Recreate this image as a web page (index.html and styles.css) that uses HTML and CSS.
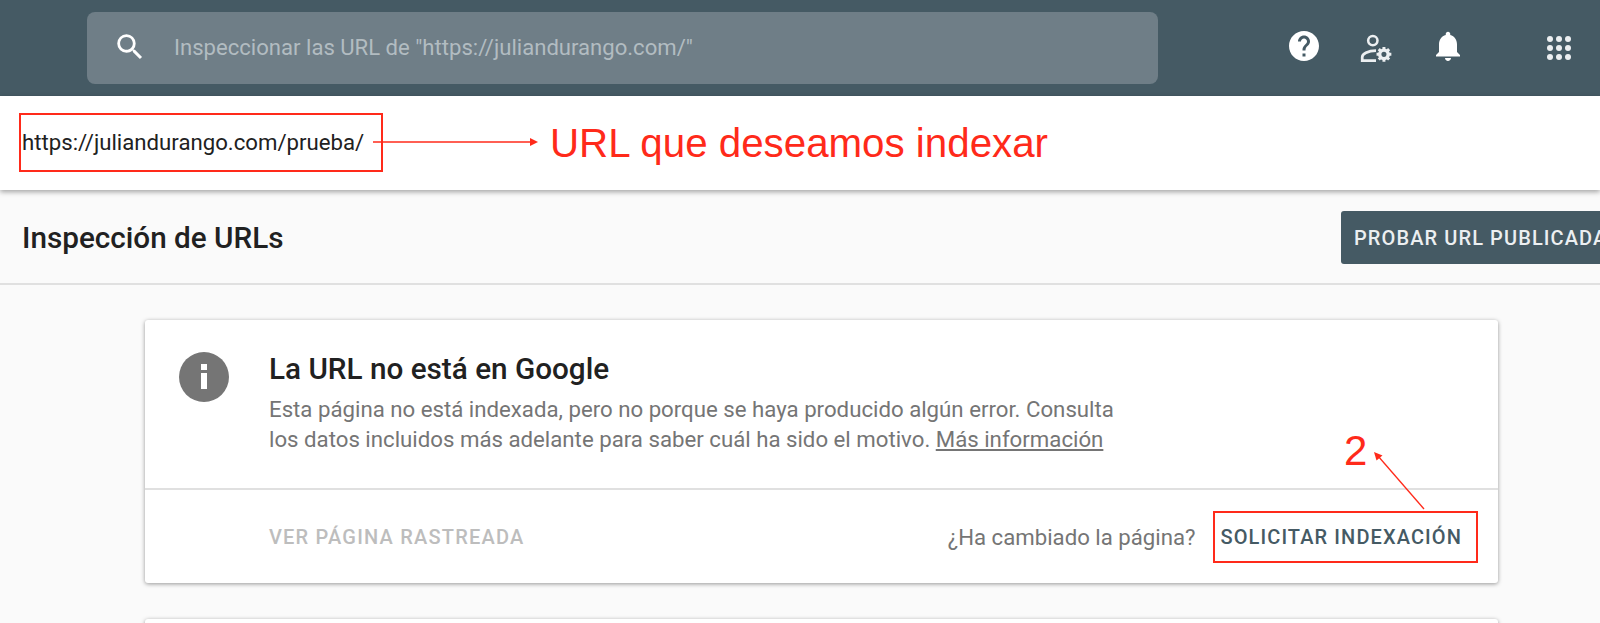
FILE: index.html
```html
<!DOCTYPE html>
<html lang="es">
<head>
<meta charset="utf-8">
<title>Inspección de URLs</title>
<link rel="stylesheet" href="styles.css">
</head>
<body>
<div class="page">
  <header class="topbar">
    <div class="search">
      <svg class="search-icon" viewBox="0 0 24 24"><path d="M15.5 14h-.79l-.28-.27A6.47 6.47 0 0 0 16 9.5 6.5 6.5 0 1 0 9.5 16c1.61 0 3.09-.59 4.23-1.57l.27.28v.79l5 4.99L20.49 19l-4.99-5zm-6 0C7.01 14 5 11.99 5 9.500S7.010 5 9.500 5 14 7.010 14 9.500 11.990 14 9.500 14z"/></svg>
      <span class="search-text">Inspeccionar las URL de "https://juliandurango.com/"</span>
    </div>
    <div class="top-icons">
      <svg class="ic ic-help" viewBox="0 0 24 24"><path d="M12 2C6.48 2 2 6.48 2 12s4.48 10 10 10 10-4.48 10-10S17.52 2 12 2zm1 17h-2v-2h2v2zm2.07-7.75l-.9.92C13.45 12.9 13 13.5 13 15h-2v-.5c0-1.1.45-2.1 1.17-2.83l1.24-1.26c.37-.36.59-.86.59-1.41 0-1.1-.9-2-2-2s-2 .9-2 2H8c0-2.21 1.79-4 4-4s4 1.79 4 4c0 .88-.36 1.68-.93 2.25z"/></svg>
      <svg class="ic ic-user" viewBox="0 0 34 30"><circle cx="14" cy="8" r="4.400" fill="none" stroke="#eceff1" stroke-width="2.400"/><path d="M17 17.500c-8 0-13 3.500-13 6v3.500h13" fill="none" stroke="#eceff1" stroke-width="2.600"/><circle cx="24.500" cy="21" r="4" fill="none" stroke="#eceff1" stroke-width="3.200"/><path d="M24.500 14v3M24.500 25v3M17.500 21h3M28.500 21h3M19.600 16.100l2.100 2.100M27.300 23.800l2.100 2.100M19.600 25.900l2.100-2.100M27.300 18.200l2.100-2.100" stroke="#eceff1" stroke-width="2.800"/></svg>
      <svg class="ic ic-bell" viewBox="0 0 24 24"><path d="M12 22c1.100 0 2-.9 2-2h-4c0 1.100.9 2 2 2zm6-6v-5c0-3.070-1.630-5.640-4.500-6.320V4c0-.83-.67-1.500-1.500-1.500s-1.500.67-1.500 1.500v.68C7.640 5.360 6 7.920 6 11v5l-2 2v1h16v-1l-2-2z"/></svg>
      <svg class="ic ic-apps" viewBox="0 0 26 26"><g fill="#eceff1"><circle cx="4" cy="4" r="3"/><circle cx="13" cy="4" r="3"/><circle cx="22" cy="4" r="3"/><circle cx="4" cy="13" r="3"/><circle cx="13" cy="13" r="3"/><circle cx="22" cy="13" r="3"/><circle cx="4" cy="22" r="3"/><circle cx="13" cy="22" r="3"/><circle cx="22" cy="22" r="3"/></g></svg>
    </div>
  </header>

  <section class="urlbar">
    <span class="url">https://juliandurango.com/prueba/</span>
  </section>

  <section class="titlebar">
    <h1 class="title">Inspección de URLs</h1>
    <button class="primary">PROBAR URL PUBLICADA</button>
  </section>

  <main class="content">
    <article class="card">
      <div class="card-body">
        <svg class="info" viewBox="0 0 50 50"><circle cx="25" cy="25" r="25" fill="#757575"/><rect x="22" y="21" width="6" height="16" fill="#fff"/><rect x="22" y="12" width="6" height="6" fill="#fff"/></svg>
        <div class="card-text">
          <h2 class="card-title">La URL no está en Google</h2>
          <p class="card-desc">Esta página no está indexada, pero no porque se haya producido algún error. Consulta<br>los datos incluidos más adelante para saber cuál ha sido el motivo. <a class="more">Más información</a></p>
        </div>
      </div>
      <div class="card-foot">
        <span class="crawled">VER PÁGINA RASTREADA</span>
        <div class="foot-right">
          <span class="changed">¿Ha cambiado la página?</span>
          <span class="request">SOLICITAR INDEXACIÓN</span>
        </div>
      </div>
    </article>
    <div class="card next"></div>
  </main>

  <div class="mark mark-url"></div>
  <div class="mark mark-req"></div>
  <span class="note note-url">URL que deseamos indexar</span>
  <span class="note note-two">2</span>
  <svg class="arrows" viewBox="0 0 1600 623"><g stroke="#ff2a1a" fill="#ff2a1a" stroke-width="1.300"><path d="M373 142H534" fill="none"/><path d="M538 142l-8-4v8z" stroke="none"/><path d="M1424 509L1378 456" fill="none"/><path d="M1374 452l2.500 8.500 6-5z" stroke="none"/></g></svg>
</div>
</body>
</html>
```

FILE: styles.css
```css
* { box-sizing: border-box; }
html, body { margin: 0; padding: 0; }
body { font-family: Roboto, "Liberation Sans", sans-serif; background: #fafafa; overflow: hidden; }
.page { position: relative; width: 1600px; height: 623px; overflow: hidden; background: #fafafa; }

.topbar { height: 96px; background: #455a64; padding: 12px 0 0 87px; display: flex; align-items: flex-start; }
.search { width: 1071px; height: 72px; background: #6f7e87; border-radius: 8px; display: flex; align-items: center; padding: 0 0 2px 26px; }
.search-icon { width: 34px; height: 34px; fill: #fff; flex: none; }
.search-text { margin-left: 27px; font-size: 22.100px; color: #b2bcc1; white-space: nowrap; }
.top-icons { height: 72px; position: relative; flex: 1; }
.ic { position: absolute; fill: #fff; }
.ic-help { left: 128px; top: 16px; width: 36px; height: 36px; }
.ic-user { left: 200px; top: 20px; width: 36px; height: 32px; }
.ic-bell { left: 272px; top: 16px; width: 36px; height: 36px; }
.ic-apps { left: 388px; top: 23px; width: 26px; height: 26px; }

.urlbar { height: 94px; background: #fff; display: flex; align-items: center; padding: 0 0 2px 22px; box-shadow: 0 2px 5px rgba(0,0,0,.35); position: relative; }
.url { font-size: 22.200px; color: #212121; }

.titlebar { height: 95px; border-bottom: 2px solid #e0e0e0; display: flex; align-items: center; justify-content: space-between; padding-left: 22px; }
.title { margin: 2px 0 0; font-size: 29.700px; font-weight: 500; color: #212121; }
.primary { flex: none; width: 259px; height: 53px; margin: 2px 0 0; border: 0; border-radius: 3px 0 0 3px; background: #455a64; color: #eceff1; font: 500 20px Roboto, sans-serif; letter-spacing: 1.100px; text-align: left; padding-left: 13px; white-space: nowrap; overflow: hidden; }

.content { padding: 35px 102px 0 145px; display: flex; flex-direction: column; gap: 36px; }
.card { background: #fff; border-radius: 3px; box-shadow: 0 1px 4px rgba(0,0,0,.4); flex: none; }
.card-body { height: 170px; border-bottom: 2px solid #e0e0e0; display: flex; padding: 32px 0 0 34px; }
.info { width: 50px; height: 50px; flex: none; }
.card-text { margin-left: 40px; padding-top: 1px; }
.card-title { margin: 0; font-size: 29.700px; font-weight: 500; color: #212121; line-height: 32px; }
.card-desc { margin: 10px 0 0; font-size: 22.230px; line-height: 29.500px; color: #757575; }
.more { color: #757575; text-decoration: underline; }
.card-foot { height: 93px; display: flex; justify-content: space-between; align-items: center; padding-left: 124px; }
.crawled { font-size: 20px; font-weight: 500; letter-spacing: 1.200px; color: #bdbdbd; }
.foot-right { display: flex; align-items: center; }
.changed { font-size: 22.200px; color: #757575; }
.request { font-size: 20px; font-weight: 500; letter-spacing: 1.100px; color: #455a64; margin: 0 36px 0 25px; }
.next { height: 60px; }

.mark { position: absolute; border: 2px solid #ff2a1a; }
.mark-url { left: 19px; top: 113px; width: 364px; height: 59px; }
.mark-req { left: 1213px; top: 511px; width: 265px; height: 52px; }
.note { position: absolute; color: #ff2a1a; font-family: "Liberation Sans", Arial, sans-serif; white-space: nowrap; }
.note-url { left: 550px; top: 121px; font-size: 40.300px; }
.note-two { left: 1344px; top: 427px; font-size: 42px; }
.arrows { position: absolute; inset: 0; width: 1600px; height: 623px; pointer-events: none; }
```
